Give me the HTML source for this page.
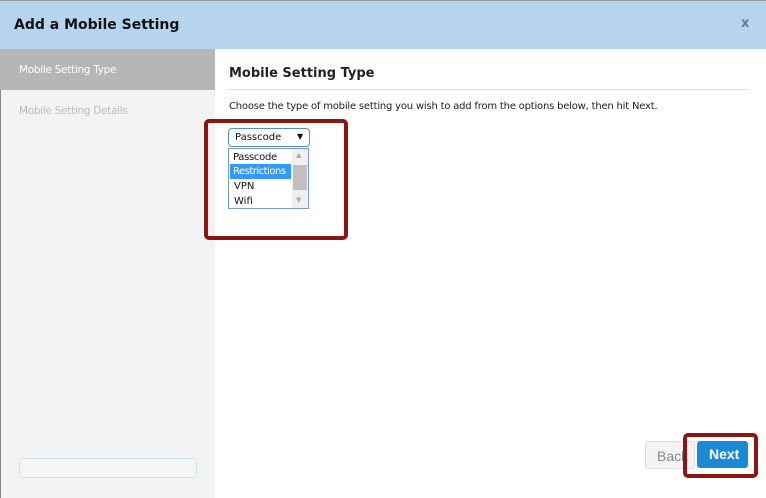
<!DOCTYPE html>
<html><head><style>
body{margin:0;width:766px;height:498px;overflow:hidden;background:#fff;font-family:"DejaVu Sans","Liberation Sans",sans-serif;position:relative}
div{position:absolute;box-sizing:border-box}
</style></head><body>
<div style="left:0;top:0;width:766px;height:49px;background:#b7d4ee;border-top:1px solid #999"></div>
<div style="left:14px;top:17px;font-size:14px;font-weight:bold;color:#111">Add a Mobile Setting</div>
<div style="left:741px;top:16px;font-size:13px;font-weight:bold;color:#6b7a8a">x</div>
<div style="left:0;top:49px;width:215px;height:449px;background:#f3f3f3;border-left:1px solid #888"></div>
<div style="left:0;top:49px;width:215px;height:41px;background:#b5b5b5"></div>
<div style="left:19px;top:64px;font-size:10.5px;color:#fff;letter-spacing:-0.3px">Mobile Setting Type</div>
<div style="left:19px;top:105px;font-size:10.5px;color:#bbb;letter-spacing:-0.3px">Mobile Setting Details</div>
<div style="left:19px;top:458px;width:178px;height:20px;border:1px solid #cde3ee;border-radius:3px;background:#f5f5f5"></div>
<div style="left:229px;top:66px;font-size:13px;font-weight:bold;color:#222">Mobile Setting Type</div>
<div style="left:228px;top:89px;width:520px;height:1px;background:#ddd"></div>
<div style="left:229px;top:101px;font-size:10px;color:#222;letter-spacing:-0.2px">Choose the type of mobile setting you wish to add from the options below, then hit Next.</div>
<div style="left:228px;top:128px;width:82px;height:19px;border:1px solid #5a8cc8;border-radius:4px;font-size:10px;padding:3px 0 0 6px;color:#111">Passcode<span style="position:absolute;left:68px;top:3px;font-size:8px">▼</span></div>
<div style="left:228px;top:148px;width:81px;height:61px;border:1px solid #7a9cc8;background:#fff"></div>
<div style="left:233px;top:150px;font-size:10px;color:#111;line-height:15px;letter-spacing:-0.3px">Passcode</div>
<div style="left:230px;top:164px;width:61px;height:15px;background:#3399ff"></div>
<div style="left:233px;top:164px;font-size:10px;color:#fff;line-height:15px;letter-spacing:-0.5px;white-space:nowrap">Restrictions</div>
<div style="left:234px;top:179px;font-size:10px;color:#111;line-height:15px">VPN</div>
<div style="left:234px;top:194px;font-size:10px;color:#111;line-height:15px">Wifi</div>
<div style="left:292px;top:149px;width:16px;height:59px;background:#f0f0f0"></div>
<div style="left:293px;top:165px;width:14px;height:25px;background:#c0c0c0"></div>
<div style="left:296px;top:151px;font-size:7px;color:#aaa">▲</div>
<div style="left:296px;top:196px;font-size:7px;color:#aaa">▼</div>
<div style="left:204px;top:119px;width:144px;height:121px;border:4px solid #8b1414;border-radius:5px"></div>
<div style="left:645px;top:441px;width:50px;height:28px;border:1px solid #ddd;border-radius:3px;background:#f3f3f3;font-family:'Liberation Sans',sans-serif;font-size:14px;color:#888;padding:6px 0 0 11px">Back</div>
<div style="left:697px;top:441px;width:51px;height:27px;border-radius:3px;background:#1a8ad6;font-family:'Liberation Sans',sans-serif;font-size:14px;font-weight:bold;color:#fff;padding:5px 0 0 12px">Next</div>
<div style="left:683px;top:433px;width:75px;height:45px;border:4px solid #8b1414;border-radius:5px"></div>
</body></html>
